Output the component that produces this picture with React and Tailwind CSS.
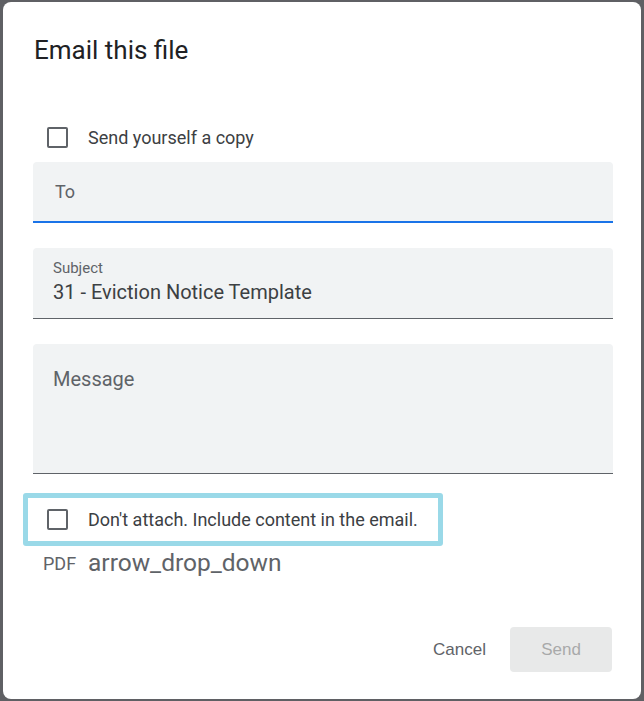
import React from "react";

const Checkbox = () => (
  <span className="block w-[21px] h-[21px] border-2 border-[#5f6368] rounded-[2px] shrink-0" />
);

const App = () => {
  return (
    <div
      className="w-[644px] h-[701px] bg-[#5f6064] pt-[2px] pl-[3px] overflow-hidden"
      style={{ fontFamily: "Roboto, 'Liberation Sans', sans-serif" }}
    >
      <div className="w-[638px] h-[697px] bg-white rounded-[8px] flex flex-col">
        {/* Title */}
        <h1 className="pl-[31px] pt-[32px] text-[26px] leading-[32px] text-[#202124]">
          Email this file
        </h1>

        {/* Send copy */}
        <label className="flex items-center gap-[20px] pl-[44px] mt-[59px] h-[24px]">
          <Checkbox />
          <span className="text-[18px] text-[#3c4043]">Send yourself a copy</span>
        </label>

        {/* To */}
        <div className="ml-[30px] mr-[28px] mt-[13px] h-[61px] bg-[#f1f3f4] rounded-t-[4px] border-b-2 border-[#1a73e8] flex items-center px-[22px]">
          <span className="text-[18px] text-[#5f6368]">To</span>
        </div>

        {/* Subject */}
        <div className="ml-[30px] mr-[28px] mt-[25px] h-[71px] bg-[#f1f3f4] rounded-t-[4px] border-b border-[#5f6368] flex flex-col px-[20px] pt-[11px]">
          <span className="text-[15px] leading-[18px] text-[#5f6368]">Subject</span>
          <span className="text-[20px] leading-[26px] text-[#3c4043] mt-[2px]">
            31 - Eviction Notice Template
          </span>
        </div>

        {/* Message */}
        <div className="ml-[30px] mr-[28px] mt-[25px] h-[130px] bg-[#f1f3f4] rounded-t-[4px] border-b border-[#5f6368] px-[20px] pt-[22px]">
          <span className="text-[20px] leading-[26px] text-[#5f6368]">Message</span>
        </div>

        {/* Don't attach (highlighted) */}
        <div className="ml-[20px] mt-[19px] w-[420px] h-[53px] border-[5px] border-[#9ad9e8] rounded-[3px] flex items-center gap-[20px] pl-[19px]">
          <Checkbox />
          <span className="text-[18px] text-[#3c4043]">
            Don't attach. Include content in the email.
          </span>
        </div>

        {/* Format */}
        <div className="flex items-center pl-[40px] mt-[2px] h-[30px]">
          <span className="text-[18px] text-[#5f6368] w-[45px]">PDF</span>
          <span className="text-[24.5px] text-[#5f6368]">arrow_drop_down</span>
        </div>

        {/* Actions */}
        <div
          className="mt-auto mb-[27px] flex items-center justify-end gap-[24px] pr-[29px]"
          style={{ fontFamily: "'Liberation Sans', Arial, sans-serif" }}
        >
          <button className="text-[17px] text-[#5f6368]">Cancel</button>
          <button className="w-[102px] h-[45px] rounded-[4px] bg-[#e8e9e9] text-[17px] text-[#a8a9aa]">
            Send
          </button>
        </div>
      </div>
    </div>
  );
};

export default App;
